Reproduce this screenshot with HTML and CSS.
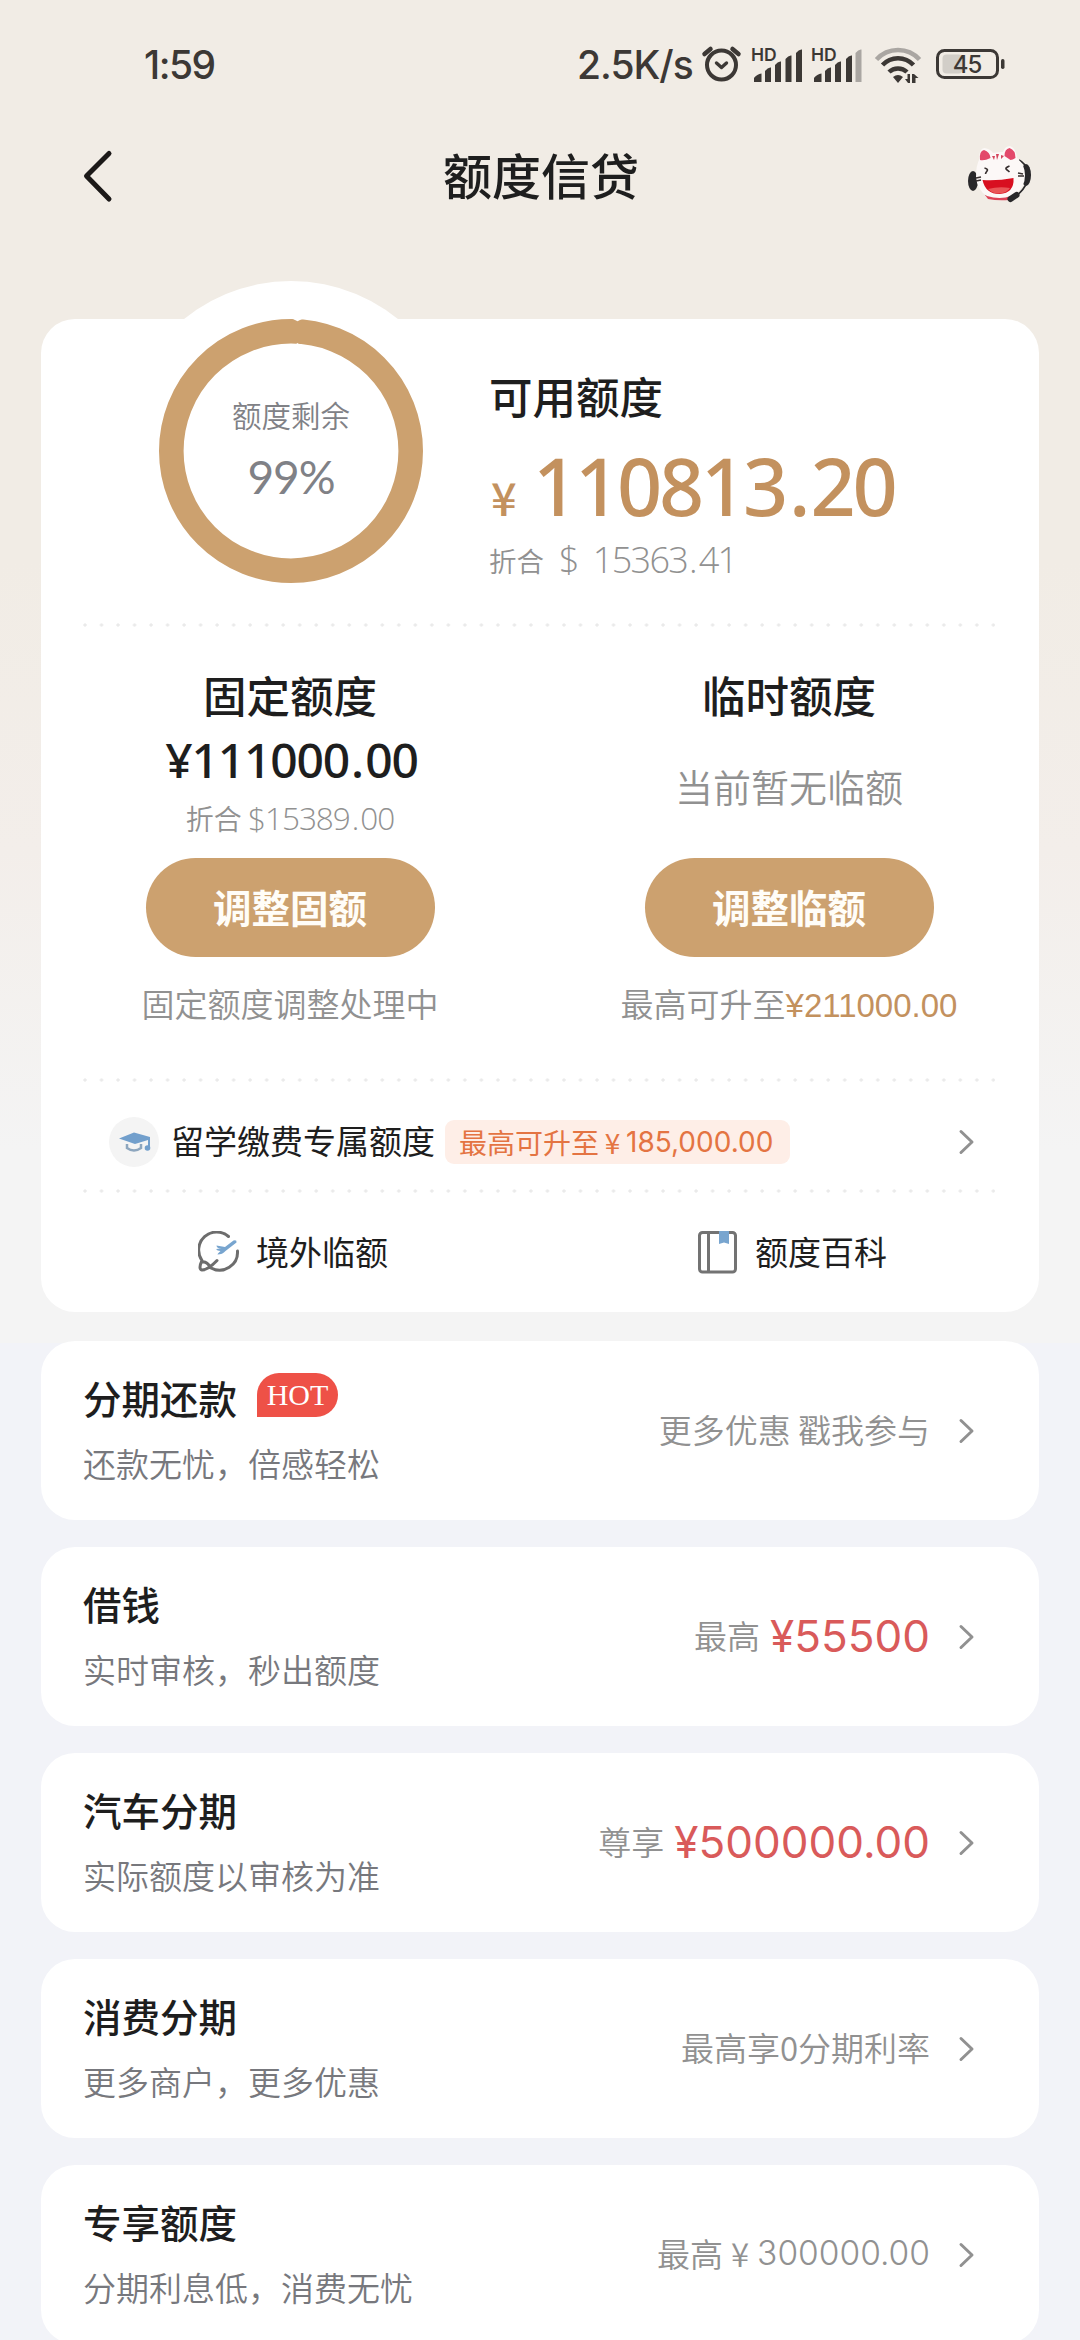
FILE: index.html
```html
<!DOCTYPE html>
<html lang="zh-CN">
<head>
<meta charset="utf-8">
<title>额度信贷</title>
<link rel="stylesheet" href="styles.css">
</head>
<body>
<div class="screen">
  <div class="statusbar">
    <span class="clock">1:59</span>
    <span class="speed">2.5K/s</span>
    <svg class="status-icons" width="304" height="40" viewBox="700 44 304 40">
      <g fill="none" stroke="#3c3835" stroke-linecap="round">
        <circle cx="720.500" cy="65" r="14.500" stroke-width="4"/>
        <path d="M715.500 63l5 4.500 5-4.500" stroke-width="3.400" stroke-linejoin="round"/>
        <path d="M703.500 54l6-5M737.500 54l-6-5" stroke-width="4.500"/>
      </g>
      <g fill="#3c3835">
        <path d="M753 82v-4q3-4 7.500-4.500V82zM764 82V71q3-4 6-3.500V82zM774 82V65q3-4 6-3.500V82zM784.500 82V59q3-4 6-3.500V82zM795 82V53q3-4 6-3.500V82z"/>
        <path d="M813 82v-4q3-4 7.500-4.500V82zM824 82V71q3-4 6-3.500V82zM834 82V65q3-4 6-3.500V82zM845 82V59q3-4 6-3.500V82z"/>
      </g>
      <path d="M854.500 82V53q3-4 6-3.500V82z" fill="#aaa6a2"/>
      <text x="750" y="60.500" class="hd">HD</text>
      <text x="810" y="60.500" class="hd">HD</text>
      <g fill="none" stroke-width="4.500">
        <path d="M875.500 59.500a29 29 0 0 1 43 0" stroke="#aaa6a2"/>
        <path d="M881.500 65a21 21 0 0 1 31 0M888 72a13 13 0 0 1 18 0" stroke="#3c3835"/>
      </g>
      <path d="M892 77q5-4 10 0l-5 6zM909 74v9h-2l-3-4h2.500v-5zM911 83v-9h2l4.500 4h-3v5z" fill="#3c3835"/>
      <rect x="941.500" y="54.500" width="20" height="19" rx="4" fill="#d2cec8"/>
      <rect x="936.500" y="50.500" width="60" height="27" rx="7" fill="none" stroke="#3c3835" stroke-width="3"/>
      <rect x="1000" y="59" width="3.500" height="10" rx="1.700" fill="#3c3835"/>
      <text x="966" y="72.500" class="battery">45</text>
    </svg>
  </div>

  <div class="navbar">
    <svg class="back" width="32" height="54" viewBox="0 0 32 54"><path d="M27 4.500L4.500 27 27 50" fill="none" stroke="#1c1918" stroke-width="5" stroke-linecap="round" stroke-linejoin="round"/></svg>
    <h1 class="title">额度信贷</h1>
    <svg class="mascot" width="66" height="64" viewBox="966 144 66 64">
      <ellipse cx="973" cy="181" rx="5" ry="10" fill="#29282a"/>
      <ellipse cx="1026" cy="175" rx="5" ry="11" fill="#29282a"/>
      <path d="M1019 160q7 4 8 10M1027 182q-3 8-11 14" stroke="#29282a" stroke-width="1.800" fill="none"/>
      <path d="M985 195h26l-2 5q-11 1-21-1z" fill="#dc4257"/>
      <path d="M976 177q0-12 3.500-18-1-10 5-11 6 1 8.500 5 5-1 10-1 2-6 7-6 6 2 7 12 8 7 8 17 0 15-14 21-11 4-24 0-10-6-11-19z" fill="#fcf8f7"/>
      <path d="M980 160q-1-9 4-10 6 2 6.500 8-6 3-10.500 2zM1004.500 156q0-7 5-8 6 2 6 10-3 2-5 2z" fill="#e3486a"/>
      <path d="M992 156l2 4 1-4zM996 154l1 6 2-6zM1001 155l0 4 3-3z" fill="#d4455c"/>
      <path d="M984.500 168q4 1 2.500 3t-1.500 3M1009.500 166q-5 2-3 3.500t3 2.500M976 178l5-1M976 181l5-1M1018 173l5 1M1018 176l6 0" fill="none" stroke="#383030" stroke-width="1.600"/>
      <path d="M982.500 180q15 1 31-2 1 15-14 16-14 0-17-14z" fill="#d80f20"/>
      <path d="M988 189q11-3 22-1-3 5-11 5.500-7 0-11-4.500z" fill="#e95557"/>
      <path d="M1010.500 199l6-4" stroke="#29282a" stroke-width="6" stroke-linecap="round"/>
    </svg>
  </div>

  <main class="content">
    <section class="card summary">
      <div class="available">
        <div class="halo"></div>
        <div class="gauge">
          <svg class="ring" width="264" height="264" viewBox="0 0 264 264"><circle cx="132" cy="132" r="119.700" fill="none" stroke="#cca16f" stroke-width="24.600"/><path d="M134 0l4.500 2.300L143 0zM136 26l2.500-2 2.500 2z" fill="#fff"/></svg>
          <span class="gauge-label">额度剩余</span>
          <span class="gauge-value">99%</span>
        </div>
        <div class="available-info">
          <h2 class="heading">可用额度</h2>
          <div class="available-amount"><span class="yen">¥</span><span class="digits">110813<span class="point">.</span>20</span></div>
          <div class="converted"><span>折合</span><span class="usd-large">$</span><span class="usd-large">15363<span class="gap">.</span>41</span></div>
        </div>
      </div>
      <div class="dots"></div>
      <div class="limits">
        <div class="limit">
          <h2 class="heading">固定额度</h2>
          <div class="fixed-amount">¥111000<span class="gap">.</span>00</div>
          <div class="fixed-usd">折合 <span class="usd-small">$15389<span class="gap">.</span>00</span></div>
          <button class="button">调整固额</button>
          <div class="note">固定额度调整处理中</div>
        </div>
        <div class="limit">
          <h2 class="heading">临时额度</h2>
          <div class="empty">当前暂无临额</div>
          <button class="button">调整临额</button>
          <div class="note">最高可升至<span class="note-amount">¥211000.00</span></div>
        </div>
      </div>
      <div class="dots"></div>
      <div class="study">
        <svg class="study-icon" width="50" height="50" viewBox="0 0 50 50"><circle cx="25" cy="25" r="25" fill="#f4f4f4"/><path d="M10 21.500L25 15.500l16 4.500v10.500h-2V23l-13 4z" fill="#729fcc"/><path d="M18 27v4q7 5 14 0v-4" fill="none" stroke="#8da6be" stroke-width="2.500"/><circle cx="38.500" cy="31" r="2.800" fill="#729fcc"/></svg>
        <span class="study-title">留学缴费专属额度</span>
        <span class="tag">最高可升至<span class="tag-yen">¥</span><span class="tag-num">185,000.00</span></span>
        <svg class="chevron" width="17" height="28" viewBox="0 0 17 28"><path d="M3 3.500L14 14 3 24.500" fill="none" stroke="#919191" stroke-width="3" stroke-linecap="round" stroke-linejoin="round"/></svg>
      </div>
      <div class="dots"></div>
      <div class="links">
        <div class="link">
          <svg width="42" height="42" viewBox="0 0 42 42"><path d="M30.500 5.500A18 18 0 0 0 4 29.500M39.500 20A18 18 0 0 1 13 37M4 29.500Q0 38 4 39q6 0 15-9.500M4.500 31q4-1 8.500 6" fill="none" stroke="#6d6d6d" stroke-width="3" stroke-linecap="round"/><path d="M18.500 14.500l8.500 1.500 8.500-6.500q3.500-1 3 2l-11 8.500q-3 3.500-8 3.500 0-1 3-3.500-3.500 0-4.500-2 2-.5 5.500 0-5-1-5-3.500z" fill="#78a5cf"/></svg>
          <span>境外临额</span>
        </div>
        <div class="link">
          <svg width="42" height="44" viewBox="0 0 42 44"><rect x="2.500" y="2.500" width="36" height="39.500" rx="3" fill="none" stroke="#737373" stroke-width="3"/><path d="M11.500 2v40" stroke="#737373" stroke-width="3"/><path d="M22 1h10v13l-5-1.500-5 1.500z" fill="#78a5cf"/></svg>
          <span>额度百科</span>
        </div>
      </div>
    </section>

    <section class="card product">
      <div><h3>分期还款<span class="hot">HOT</span></h3><p>还款无忧，倍感轻松</p></div>
      <div class="offer">更多优惠 戳我参与</div>
      <svg class="chevron" width="17" height="28" viewBox="0 0 17 28"><path d="M3 3.500L14 14 3 24.500" fill="none" stroke="#919191" stroke-width="3" stroke-linecap="round" stroke-linejoin="round"/></svg>
    </section>
    <section class="card product">
      <div><h3>借钱</h3><p>实时审核，秒出额度</p></div>
      <div class="offer">最高<span class="price">¥55500</span></div>
      <svg class="chevron" width="17" height="28" viewBox="0 0 17 28"><path d="M3 3.500L14 14 3 24.500" fill="none" stroke="#919191" stroke-width="3" stroke-linecap="round" stroke-linejoin="round"/></svg>
    </section>
    <section class="card product">
      <div><h3>汽车分期</h3><p>实际额度以审核为准</p></div>
      <div class="offer">尊享<span class="price">¥500000.00</span></div>
      <svg class="chevron" width="17" height="28" viewBox="0 0 17 28"><path d="M3 3.500L14 14 3 24.500" fill="none" stroke="#919191" stroke-width="3" stroke-linecap="round" stroke-linejoin="round"/></svg>
    </section>
    <section class="card product">
      <div><h3>消费分期</h3><p>更多商户，更多优惠</p></div>
      <div class="offer">最高享0分期利率</div>
      <svg class="chevron" width="17" height="28" viewBox="0 0 17 28"><path d="M3 3.500L14 14 3 24.500" fill="none" stroke="#919191" stroke-width="3" stroke-linecap="round" stroke-linejoin="round"/></svg>
    </section>
    <section class="card product">
      <div><h3>专享额度</h3><p>分期利息低，消费无忧</p></div>
      <div class="offer">最高<span class="offer-yen">¥</span><span class="offer-num">300000.00</span></div>
      <svg class="chevron" width="17" height="28" viewBox="0 0 17 28"><path d="M3 3.500L14 14 3 24.500" fill="none" stroke="#919191" stroke-width="3" stroke-linecap="round" stroke-linejoin="round"/></svg>
    </section>
  </main>
</div>
</body>
</html>
```

FILE: styles.css
```css
* { box-sizing: border-box; }
html, body { margin: 0; }
body {
  width: 1080px;
  height: 2340px;
  overflow: hidden;
  background: #f2f3f8;
  font-family: "Noto Sans CJK SC", sans-serif;
  color: #1e1e1e;
}
h1, h2, h3, p { margin: 0; font-weight: 500; }
svg { display: block; flex: none; }

.screen {
  height: 2340px;
  overflow: hidden;
  background: linear-gradient(#f1ece5 0, #f1ece5 560px, #f3eeea 850px, #f4f4f4 1150px, #f4f4f4 1343px, #f2f3f8 1343px);
}

/* status bar */
.statusbar {
  display: flex;
  align-items: center;
  height: 128px;
  padding-left: 144px;
  font-family: Inter, sans-serif;
  font-size: 39px;
  font-weight: 500;
  line-height: 1;
  color: #3c3835;
}
.clock { width: 433px; letter-spacing: -1.5px; }
.speed { width: 124px; white-space: nowrap; letter-spacing: -1px; }
.hd { font: 600 17.500px Inter, sans-serif; fill: #3c3835; }
.battery { font: 500 24px Inter, sans-serif; fill: #3c3835; text-anchor: middle; letter-spacing: -1px; }

/* navigation */
.navbar {
  display: flex;
  align-items: center;
  justify-content: space-between;
  height: 96px;
  padding: 0 48px 0 82px;
}
.title { font-size: 49px; line-height: 72px; margin: -5px 0 0 2px; }

/* cards */
.content {
  display: flex;
  flex-direction: column;
  gap: 27px;
  padding: 95px 41px 0;
}
.card { flex: none; background: #fff; border-radius: 34px; }
.summary { height: 993px; margin-bottom: 2px; display: flex; flex-direction: column; }
.dots {
  flex: none;
  width: 912px;
  height: 4px;
  margin-left: 42px;
  background: radial-gradient(circle at 2px 2px, #eaeaea 1.300px, transparent 2px) 0 0 / 16.520px 4px repeat-x;
}
.heading { font-size: 43.500px; line-height: 60px; }

/* available limit */
.available { position: relative; display: flex; height: 304px; }
.halo {
  position: absolute;
  left: 80px;
  top: -38px;
  width: 340px;
  height: 340px;
  border-radius: 50%;
  background: #fff;
}
.gauge {
  position: relative;
  width: 264px;
  height: 264px;
  margin-left: 118px;
  display: flex;
  flex-direction: column;
  align-items: center;
  padding-top: 75px;
  color: #808186;
}
.ring { position: absolute; inset: 0; }
.gauge-label { font-size: 29.500px; line-height: 40px; font-weight: 350; }
.gauge-value { font: 400 46px/60px Lato, sans-serif; letter-spacing: -1px; margin-top: 13px; }
.available-info { position: relative; padding: 47px 0 0 66px; white-space: nowrap; }
.available-amount {
  display: flex;
  align-items: baseline;
  height: 90px;
  margin-top: 15px;
  color: #c3915e;
  font-family: "Noto Sans", sans-serif;
  font-weight: 500;
  line-height: 90px;
}
.yen { width: 44px; padding-left: 2px; font: 500 45px/60px "Noto Sans CJK SC", sans-serif; }
.digits { font-size: 79px; letter-spacing: -3.200px; }
.point { margin-left: 4px; letter-spacing: 0; }
.gap { margin-left: 2px; letter-spacing: 1px; }
.converted { display: flex; align-items: center; height: 48px; margin-top: 5px; font-size: 27.500px; font-weight: 350; color: #919191; }
.usd-large { font: 300 36px/48px "Open Sans", sans-serif; letter-spacing: -1.700px; margin-left: 15px; }

/* fixed and temporary limits */
.limits { display: grid; grid-template-columns: 498px 500px; height: 451px; padding-top: 38px; }
.limit { display: flex; flex-direction: column; align-items: center; white-space: nowrap; }
.fixed-amount { font: 500 48px/64px "Noto Sans", sans-serif; letter-spacing: -1.200px; margin: 3px 0 0 3px; }
.fixed-usd { height: 48px; font-size: 28px; line-height: 48px; font-weight: 350; color: #919191; margin-top: 2px; }
.usd-small { font: 300 31.500px/48px "Open Sans", sans-serif; letter-spacing: -1px; }
.button {
  width: 289px;
  height: 99px;
  margin-top: 16px;
  border: 0;
  padding: 0 0 4px;
  border-radius: 50px;
  background: #cca16f;
  color: #fffdf8;
  font: 700 38.500px/56px "Noto Sans CJK SC", sans-serif;
}
.note { font-size: 33px; line-height: 48px; font-weight: 350; color: #919191; margin-top: 22px; }
.note-amount { font-family: "Liberation Sans", sans-serif; font-weight: 400; color: #c3915e; }
.empty { font-size: 38px; line-height: 56px; font-weight: 350; color: #919191; margin: 33px 0 28px; }

/* study row */
.study { display: flex; align-items: center; height: 107px; padding: 12px 0 0 68px; white-space: nowrap; }
.study-title { font-size: 33px; line-height: 48px; margin: -3px 0 0 12px; width: 274px; }
.tag {
  display: flex;
  align-items: center;
  width: 345px;
  height: 44px;
  padding-left: 14px;
  border-radius: 9px;
  background: #feeee7;
  color: #e47442;
  font-size: 28px;
}
.tag-yen { width: 27px; text-align: center; }
.tag-num { font-family: Inter, sans-serif; font-size: 28px; }
.study .chevron { margin-left: 168px; }

/* shortcuts */
.links { display: grid; grid-template-columns: 499px 499px; height: 118px; }
.link { display: flex; align-items: center; gap: 16px; padding-left: 157px; font-size: 33px; line-height: 48px; }
.link span { margin-top: -3px; }

/* products */
.product { display: flex; align-items: center; height: 179px; padding: 0 64px 0 42px; white-space: nowrap; }
.product > div:first-child { margin-top: -8px; }
.product h3 { display: flex; align-items: center; font-size: 38.500px; line-height: 60px; }
.product p { font-size: 33px; line-height: 48px; font-weight: 350; color: #77787d; margin-top: 12px; margin-bottom: 0; }
.hot {
  width: 81px;
  height: 44px;
  margin: -3px 0 0 20px;
  border-radius: 22px 22px 22px 0;
  background: #ee5147;
  color: #fff;
  font: 400 30px/43px "Liberation Serif", serif;
  text-align: center;
}
.offer { display: flex; align-items: center; margin: -4px 0 0 auto; font-size: 33px; font-weight: 350; color: #919191; }
.product .chevron { margin-left: 28px; }
.price { font: 400 44px/60px Inter, sans-serif; color: #d95a5a; margin: 3px 0 0 10px; }
.offer-yen { width: 34px; text-align: center; }
.offer-num { font-family: Inter, sans-serif; font-weight: 300; font-size: 33.500px; }
```
